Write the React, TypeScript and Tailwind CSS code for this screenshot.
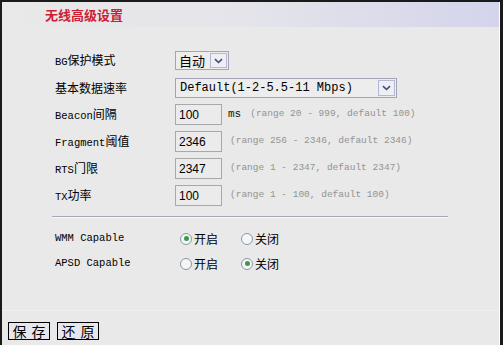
import { ReactNode } from 'react'

const cjk = '"Noto Sans CJK SC", "Liberation Sans", sans-serif'
const mono = '"Liberation Mono", "Noto Sans CJK SC", monospace'

function Label({ children }: { children: ReactNode }) {
  return (
    <div className="w-[120px] shrink-0 text-[12px] text-black" style={{ fontFamily: cjk }}>
      {children}
    </div>
  )
}

// latin part of a label, drawn in mono like the bitmap font
function L({ children }: { children: ReactNode }) {
  return (
    <span className="text-[10.5px]" style={{ fontFamily: mono }}>
      {children}
    </span>
  )
}

function Arrow() {
  return (
    <div className="flex h-full w-[17px] items-center justify-center border border-[#b4b8d4] bg-[#eeeef4]">
      <svg width="9" height="6" viewBox="0 0 9 6">
        <path d="M1 1.2 L4.5 4.5 L8 1.2" fill="none" stroke="#3c4c78" strokeWidth="1.6" />
      </svg>
    </div>
  )
}

function Field({ value, unit, hint }: { value: string; unit?: string; hint: string }) {
  return (
    <div className="flex items-center">
      <div
        className="flex h-[21px] w-[47px] items-center border border-[#a8a8a8] bg-[#ebebeb] pl-[3px] text-[12px] text-black"
        style={{ fontFamily: '"Liberation Sans", sans-serif' }}
      >
        {value}
      </div>
      {unit && (
        <span className="ml-[6px] text-[11px] text-[#111]" style={{ fontFamily: mono }}>
          {unit}
        </span>
      )}
      <span
        className={unit ? 'ml-[9px] text-[9.5px] text-[#939393]' : 'ml-[8px] text-[9.5px] text-[#939393]'}
        style={{ fontFamily: mono }}
      >
        {hint}
      </span>
    </div>
  )
}

function Radio({ checked, text }: { checked?: boolean; text: string }) {
  return (
    <div className="flex items-center">
      <span className="flex h-[12px] w-[12px] items-center justify-center rounded-full border border-[#8898ac] bg-[#f6f6f6]">
        {checked && <span className="h-[5px] w-[5px] rounded-full bg-[#3a9a4a]" />}
      </span>
      <span className="ml-[2px] text-[12px] text-black" style={{ fontFamily: cjk }}>
        {text}
      </span>
    </div>
  )
}

function Btn({ a, b }: { a: string; b: string }) {
  return (
    <button
      className="flex h-[18px] w-[42px] items-center justify-center gap-[5px] border border-black bg-[#e6e6ee] text-[14px] leading-none text-black"
      style={{ fontFamily: cjk }}
    >
      <span>{a}</span>
      <span>{b}</span>
    </button>
  )
}

export default function App() {
  return (
    <div className="flex h-[345px] w-[503px] flex-col overflow-hidden border-t-2 border-l-2 border-r-[3px] border-[#1a1a1a] bg-[#e9e9e9]">
      <div className="flex h-[25px] items-center border-r border-white bg-gradient-to-r from-[#e9e9e9] via-[#e4e4ea] to-[#d4d4ec] pl-[43px]">
        <span className="text-[13px] font-bold text-[#cc1f33]" style={{ fontFamily: cjk }}>
          无线高级设置
        </span>
      </div>
      <div className="flex flex-1 flex-col border-r border-white">
        <div className="mt-[20px] flex flex-col pl-[53px]">
          <div className="flex h-[27px] items-center">
            <Label>
              <L>BG</L>保护模式
            </Label>
            <div className="flex h-[19px] items-stretch border border-[#a4a4b8] bg-[#ededed] p-px">
              <span className="flex w-[33px] items-center pl-[2px] text-[13px] text-black" style={{ fontFamily: cjk }}>
                自动
              </span>
              <Arrow />
            </div>
          </div>
          <div className="flex h-[27px] items-center">
            <Label>基本数据速率</Label>
            <div className="flex h-[20px] w-[222px] items-stretch border border-[#a4a4b8] bg-[#ededed] p-px">
              <span className="flex flex-1 items-center pl-[3px] text-[12px] text-black" style={{ fontFamily: mono }}>
                Default(1-2-5.5-11 Mbps)
              </span>
              <Arrow />
            </div>
          </div>
          <div className="flex h-[27px] items-center">
            <Label>
              <L>Beacon</L>间隔
            </Label>
            <Field value="100" unit="ms" hint="(range 20 - 999, default 100)" />
          </div>
          <div className="flex h-[27px] items-center">
            <Label>
              <L>Fragment</L>阈值
            </Label>
            <Field value="2346" hint="(range 256 - 2346, default 2346)" />
          </div>
          <div className="flex h-[27px] items-center">
            <Label>
              <L>RTS</L>门限
            </Label>
            <Field value="2347" hint="(range 1 - 2347, default 2347)" />
          </div>
          <div className="flex h-[27px] items-center">
            <Label>
              <L>TX</L>功率
            </Label>
            <Field value="100" hint="(range 1 - 100, default 100)" />
          </div>
        </div>

        <div className="ml-[50px] mt-[7px] w-[396px] border-t border-b border-t-[#a6a6b6] border-b-[#f8f8f8]" />

        <div className="mt-[8px] flex flex-col pl-[53px]">
          <div className="flex h-[25px] items-center">
            <div className="w-[125px] shrink-0 text-[10.5px] text-black" style={{ fontFamily: mono }}>
              WMM Capable
            </div>
            <div className="flex w-[61px]">
              <Radio checked text="开启" />
            </div>
            <Radio text="关闭" />
          </div>
          <div className="flex h-[25px] items-center">
            <div className="w-[125px] shrink-0 text-[10.5px] text-black" style={{ fontFamily: mono }}>
              APSD Capable
            </div>
            <div className="flex w-[61px]">
              <Radio text="开启" />
            </div>
            <Radio checked text="关闭" />
          </div>
        </div>

        <div className="mt-[34px] border-t border-[#efefef]" />

        <div className="mt-[11px] flex gap-[7px] pl-[6px]">
          <Btn a="保" b="存" />
          <Btn a="还" b="原" />
        </div>
      </div>
    </div>
  )
}
